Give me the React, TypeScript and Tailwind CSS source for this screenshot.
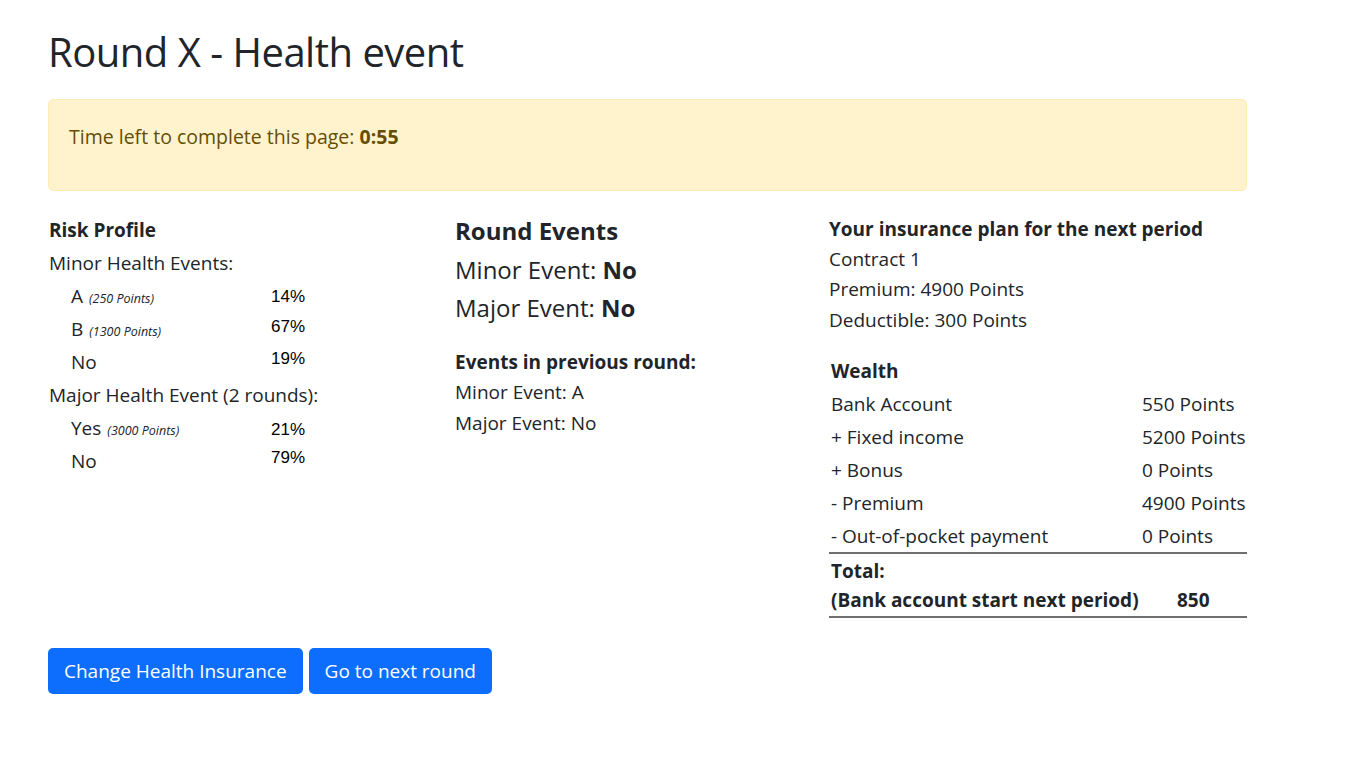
import React from "react";

const minor = [
  { label: "A", pts: "(250 Points)", pct: "14%", shift: "mt-[1px]" },
  { label: "B", pts: "(1300 Points)", pct: "67%", shift: "-mt-[5px]" },
  { label: "No", pts: "", pct: "19%", shift: "-mt-[7px]" },
];

const major = [
  { label: "Yes", pts: "(3000 Points)", pct: "21%", shift: "mt-[3px]" },
  { label: "No", pts: "", pct: "79%", shift: "-mt-[7px]" },
];

const wealth = [
  ["Bank Account", "550 Points"],
  ["+ Fixed income", "5200 Points"],
  ["+ Bonus", "0 Points"],
  ["- Premium", "4900 Points"],
  ["- Out-of-pocket payment", "0 Points"],
];

const ProbRow = ({ label, pts, pct, shift }: { label: string; pts: string; pct: string; shift: string }) => (
  <div className="flex h-[33px] items-center">
    <div className="w-[222px] pl-[22px]">
      {label}
      {pts && <i className="ml-[6px] text-[12.5px]">{pts}</i>}
    </div>
    <div className={`font-['Liberation_Sans',Arial,sans-serif] text-[17px] text-black ${shift}`}>{pct}</div>
  </div>
);

const App = () => {
  return (
    <div className="min-h-[779px] bg-white font-['Open_Sans',sans-serif] text-[19px] text-[#212529]">
      <div className="w-[1199px] pl-[48px] box-content">
        <h1 className="pt-[24px] text-[40px] leading-[56px] font-normal tracking-[-0.5px]">Round X - Health event</h1>

        <div className="mt-[19px] h-[92px] rounded-[5px] border border-[#ffecb5] bg-[#fff3cd] pl-[20px] pt-[22px] text-[19.5px] text-[#664d03]">
          Time left to complete this page: <b>0:55</b>
        </div>

        <div className="mt-[23px] grid grid-cols-[407px_374px_418px]">
          <div className="pl-[1px]">
            <div className="h-[32px] font-bold leading-[32px]">Risk Profile</div>
            <div className="h-[34px] leading-[34px]">Minor Health Events:</div>
            {minor.map((r) => (
              <ProbRow key={r.label + r.pct} {...r} />
            ))}
            <div className="h-[33px] leading-[33px]">Major Health Event (2 rounds):</div>
            {major.map((r) => (
              <ProbRow key={r.label + r.pct} {...r} />
            ))}
          </div>

          <div>
            <div className="h-[37px] text-[24px] font-bold leading-[34px]">Round Events</div>
            <div className="h-[38px] text-[24px] leading-[38px]">
              Minor Event: <b>No</b>
            </div>
            <div className="h-[38px] text-[24px] leading-[38px]">
              Major Event: <b>No</b>
            </div>
            <div className="mt-[20px] h-[30px] font-bold leading-[30px]">Events in previous round:</div>
            <div className="h-[31px] leading-[31px]">Minor Event: A</div>
            <div className="h-[31px] leading-[31px]">Major Event: No</div>
          </div>

          <div>
            <div className="h-[30px] font-bold leading-[30px]">Your insurance plan for the next period</div>
            <div className="h-[30px] leading-[30px]">Contract 1</div>
            <div className="h-[31px] leading-[31px]">Premium: 4900 Points</div>
            <div className="h-[30px] leading-[30px]">Deductible: 300 Points</div>

            <div className="mt-[20px] h-[33px] pl-[2px] font-bold leading-[33px]">Wealth</div>
            {wealth.map(([k, v]) => (
              <div key={k} className="flex h-[33px] items-center pl-[2px]">
                <div className="w-[311px]">{k}</div>
                <div>{v}</div>
              </div>
            ))}
            <div className="-mt-[1px] border-t-2 border-[#6f6f6f] pl-[2px] font-bold">
              <div className="h-[31px] leading-[34px]">Total:</div>
              <div className="flex h-[31px] items-center">
                <div className="w-[346px]">(Bank account start next period)</div>
                <div>850</div>
              </div>
            </div>
            <div className="border-t-2 border-[#6f6f6f]" />
          </div>
        </div>

        <div className="mt-[30px] flex gap-[6px]">
          <button className="h-[46px] rounded-[5px] bg-[#0d6efd] px-[16px] text-[19px] text-white">
            Change Health Insurance
          </button>
          <button className="h-[46px] rounded-[5px] bg-[#0d6efd] px-[16px] text-[19px] text-white">
            Go to next round
          </button>
        </div>
      </div>
    </div>
  );
};

export default App;
